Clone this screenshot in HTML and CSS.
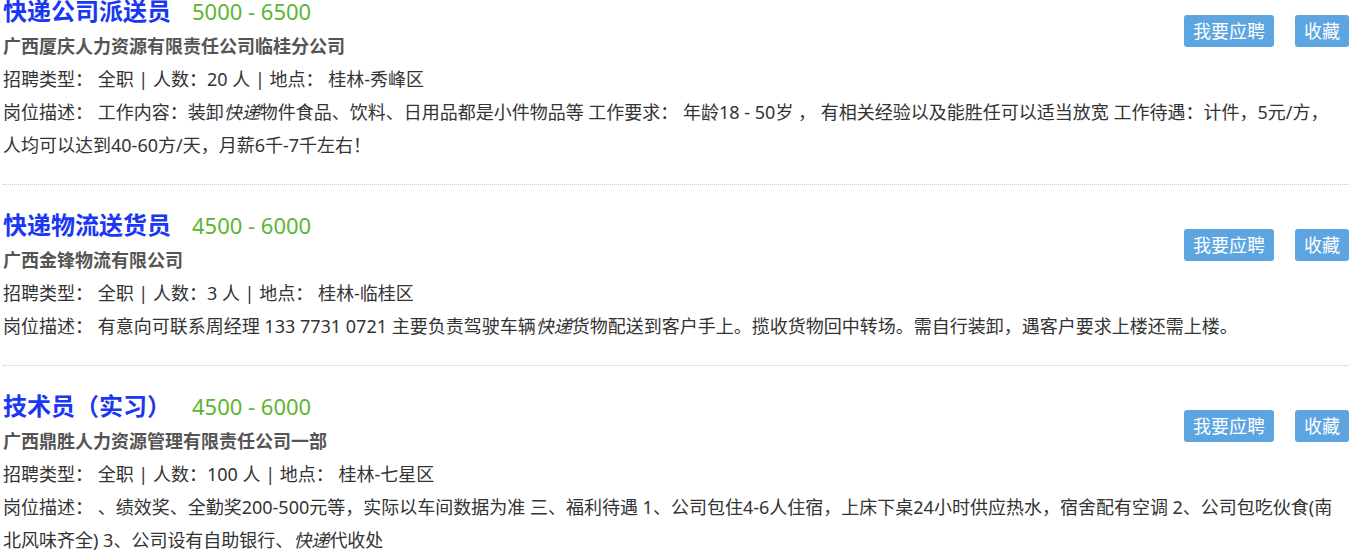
FILE: index.html
```html
<!doctype html>
<html lang="zh-CN">
<head>
<meta charset="utf-8">
<title>招聘信息</title>
<link rel="stylesheet" href="styles.css">
</head>

<body>

<!-- job list -->
<main class="job-list">

  <section class="job">
    <div class="job-head">
      <h2><a class="job-title" href="#">快递公司派送员</a><span class="salary">5000 - 6500</span></h2>
      <p class="company">广西厦庆人力资源有限责任公司临桂分公司</p>
    </div>
    <div class="job-actions">
      <a class="btn" href="#">我要应聘</a>
      <a class="btn" href="#">收藏</a>
    </div>
    <p class="info">招聘类型：&nbsp;全职 | 人数：20 人 | 地点：&nbsp;桂林-秀峰区</p>
    <p class="desc">岗位描述：&nbsp;工作内容：装卸<em>快递</em>物件食品、饮料、日用品都是小件物品等 工作要求： 年龄18 - 50岁 ， 有相关经验以及能胜任可以适当放宽 工作待遇：计件，5元/方，人均可以达到40-60方/天，月薪6千-7千左右！</p>
  </section>

  <section class="job">
    <div class="job-head">
      <h2><a class="job-title" href="#">快递物流送货员</a><span class="salary">4500 - 6000</span></h2>
      <p class="company">广西金锋物流有限公司</p>
    </div>
    <div class="job-actions">
      <a class="btn" href="#">我要应聘</a>
      <a class="btn" href="#">收藏</a>
    </div>
    <p class="info">招聘类型：&nbsp;全职 | 人数：3 人 | 地点：&nbsp;桂林-临桂区</p>
    <p class="desc">岗位描述：&nbsp;有意向可联系周经理 133 7731 0721 主要负责驾驶车辆<em>快递</em>货物配送到客户手上。揽收货物回中转场。需自行装卸，遇客户要求上楼还需上楼。</p>
  </section>

  <section class="job">
    <div class="job-head">
      <h2><a class="job-title" href="#">技术员（实习）</a><span class="salary">4500 - 6000</span></h2>
      <p class="company">广西鼎胜人力资源管理有限责任公司一部</p>
    </div>
    <div class="job-actions">
      <a class="btn" href="#">我要应聘</a>
      <a class="btn" href="#">收藏</a>
    </div>
    <p class="info">招聘类型：&nbsp;全职 | 人数：100 人 | 地点：&nbsp;桂林-七星区</p>
    <p class="desc">岗位描述：&nbsp;、绩效奖、全勤奖200-500元等，实际以车间数据为准 三、福利待遇 1、公司包住4-6人住宿，上床下桌24小时供应热水，宿舍配有空调 2、公司包吃伙食(南北风味齐全) 3、公司设有自助银行、<em>快递</em>代收处</p>
  </section>

</main>

</body>
</html>
```

FILE: styles.css
```css
:root{
  --txt:    #333;      /* body text */
  --muted:  #555;      /* company name */
  --title:  #1937f5;   /* job title */
  --salary: #5cb531;   /* salary */
  --line:   #ccc;      /* dotted separator */
  --btn:    #5ca5e1;   /* buttons */
}

* {
  box-sizing: border-box;
  margin: 0;
  padding: 0;
}
body {
  font-family: 'Noto Sans', 'Noto Sans CJK SC', sans-serif;
  color: var(--txt);
  background: #fff;
  font-size: 18px;
  overflow: hidden;
}

/* ── list ─────────────────────────────────────────────────────── */
.job-list {
  margin-top: -29px;
  padding: 0 4px 0 3px;
}
.job {
  display: grid;
  grid-template-columns: 1fr auto;
  padding: 22px 0;
  border-bottom: 1px dotted var(--line);
}
.job-head h2 {
  font-size: 24px;
  line-height: 36px;
  font-weight: 700;
}
.job-title {
  color: var(--title);
  text-decoration: none;
}
.salary {
  color: var(--salary);
  font-size: 22px;
  font-weight: 400;
  margin-left: 21px;
}
.company {
  color: var(--muted);
  font-weight: 700;
  font-size: 18px;
  line-height: 34px;
}
.info,
.desc {
  grid-column: 1 / -1;
  line-height: 33px;
}
.desc {
  padding-right: 5px;
}
.desc em {
  font-style: italic;
}

/* ── buttons ──────────────────────────────────────────────────── */
.job-actions {
  display: flex;
  gap: 21px;
  align-items: flex-start;
  margin-top: 22px;
}
.btn {
  background: var(--btn);
  color: #fff;
  font-size: 18px;
  line-height: 32px;
  padding: 0 9px;
  border-radius: 3px;
  text-decoration: none;
}
```
